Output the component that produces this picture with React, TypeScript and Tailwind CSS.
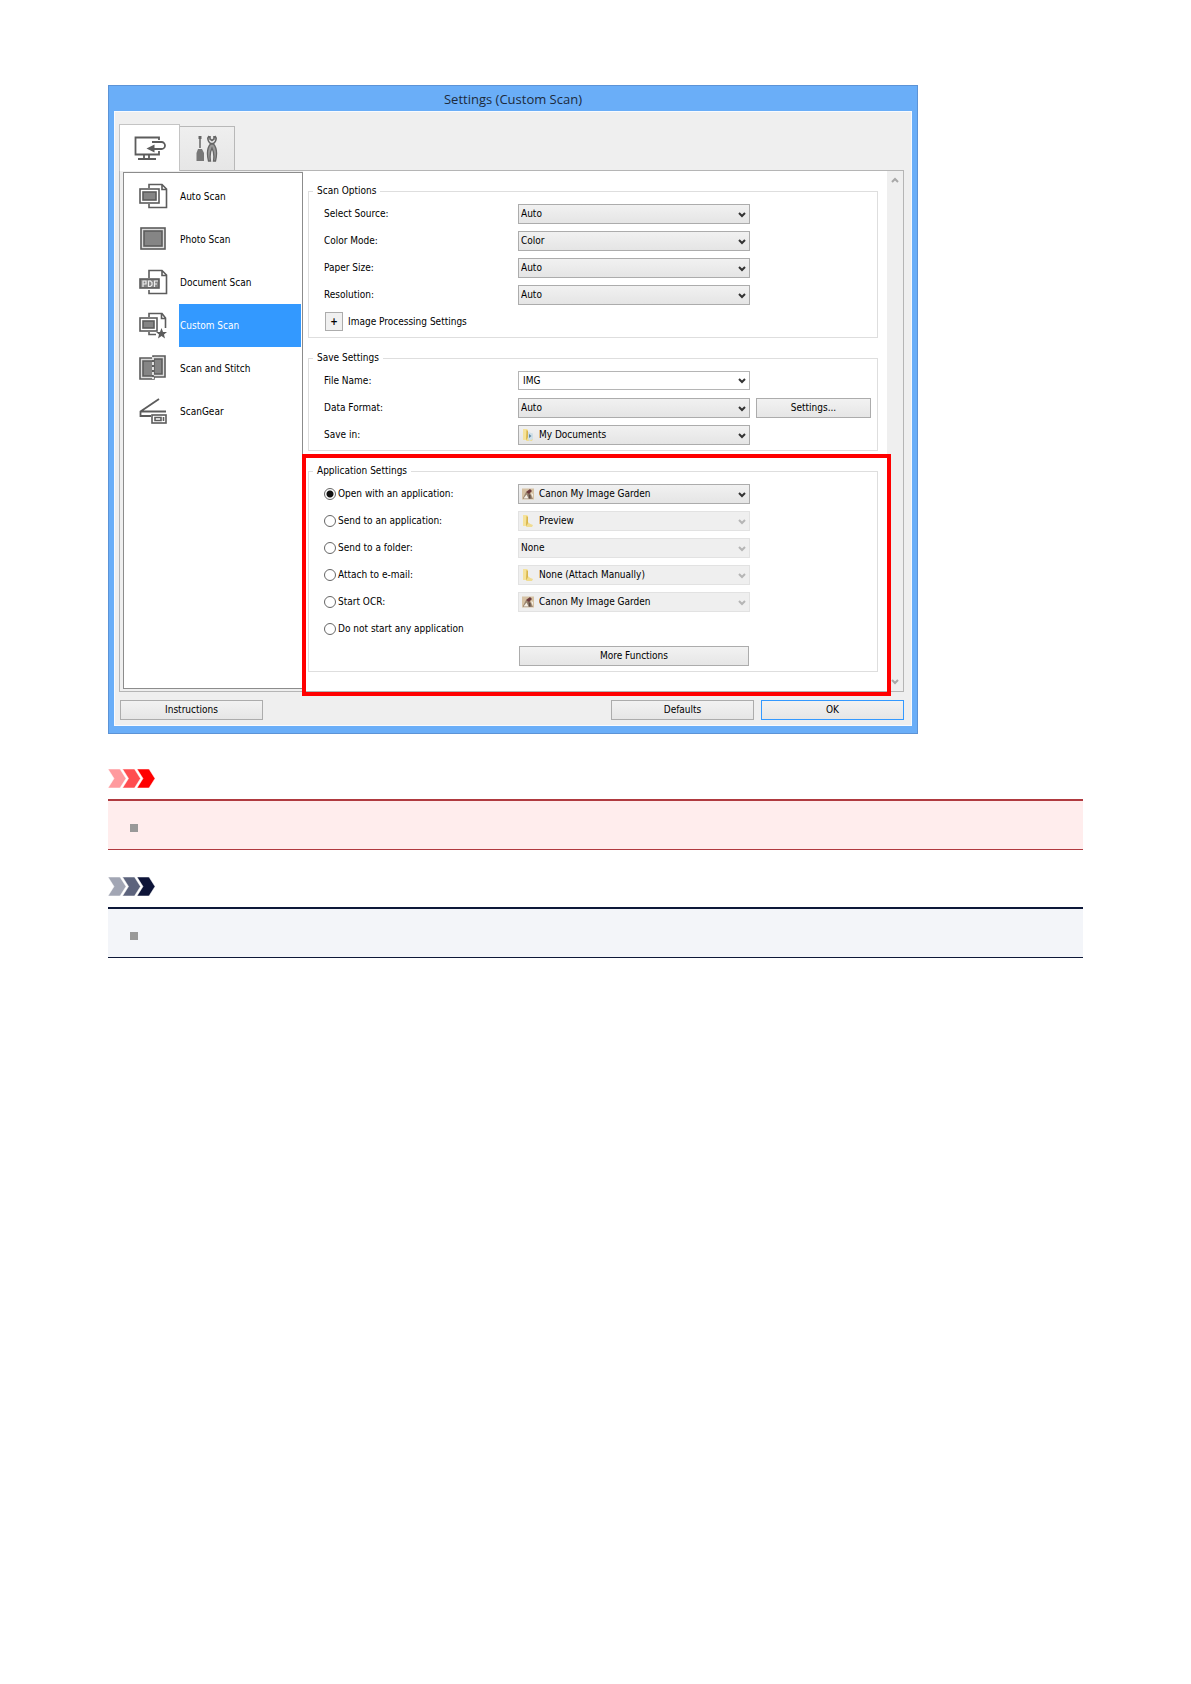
import React from 'react';

const Chevron = ({ className = '' }: { className?: string }) => (
  <svg viewBox="0 0 8 6" className={className} fill="none" stroke="currentColor" strokeWidth="2" aria-hidden="true">
    <path d="M1 1l3 3 3-3" />
  </svg>
);

const FolderIcon = ({ docs = false }: { docs?: boolean }) => (
  <svg viewBox="0 0 12 12" className="size-3" aria-hidden="true">
    <path d="M1 0h4l1 1v6l2 2v2H1z" fill="#f5e29a" />
    <path d="M4.500 1L6 2v8l-2 1z" fill="#d9b64c" />
    <path d="M6 8l5 2-1 2H4z" fill="#f0dc92" />
    {docs && <path d="M6 3l5 1.500V10l-4 2-1-3z" fill="#cfdfe8" />}
    {docs && <path d="M7 5l2.500 2L7 9z" fill="#5f87a0" />}
  </svg>
);

const GardenIcon = () => (
  <svg viewBox="0 0 12 12" className="size-3" aria-hidden="true">
    <rect x="0" y="0.500" width="12" height="11" fill="#d6c2a4" />
    <path d="M1 10l3-6 4 1 3 6H1z" fill="#9a8570" />
    <path d="M4 4l4-3 2 2-3 3z" fill="#6b3a3a" />
    <path d="M1.500 10.500l3-4 2 4zM9 5l2 1v4z" fill="#f4efe6" />
    <path d="M6.500 6l2 1v3.500H7z" fill="#5b4a44" />
  </svg>
);

const MonitorIcon = () => (
  <svg viewBox="0 0 32 25" className="h-[25px] w-8" fill="none" stroke="#5c5c5c" strokeWidth="1.800" aria-hidden="true">
    <path d="M25 4V1.500H1.500v17H25V15" />
    <path d="M10 18.500v4M15 18.500v4M4 23h18" />
    <path d="M18 6h9.500a3.500 3.500 0 010 7H19" />
    <path d="M12.500 12.500l8-4v8z" fill="#5c5c5c" stroke="none" />
  </svg>
);

const ToolsIcon = () => (
  <svg viewBox="0 0 22 27" className="h-[27px] w-[22px]" fill="none" stroke="#666" aria-hidden="true">
    <path d="M4 1v12" strokeWidth="1.500" />
    <path d="M2.500 1h3v3h-3z" fill="#666" stroke="none" />
    <path d="M2 14h4l2 4v8H.5v-8z" fill="#777" stroke="none" />
    <path d="M13 1c-2 2-1 6 1.500 7.500h3C20 7 21 3 19 1M14 1v3l2 1.500L18 4V1" strokeWidth="1.600" />
    <path d="M14.500 9C11 13 11 20 12.500 26h2c-1-6 0-10 1.500-13 1.500 3 2.500 7 1.500 13h2C21 20 21 13 17.500 9z" fill="#999" strokeWidth="1.300" />
  </svg>
);

const AutoIcon = () => (
  <>
    <path d="M10 5V1.500h13l4.500 4.500v18.500H10V21M23 2v4.500h4" />
    <rect x="1" y="6" width="19" height="14" fill="#fff" />
    <rect x="4" y="9" width="13" height="8" fill="#858585" />
  </>
);

const PhotoIcon = () => (
  <>
    <rect x="2" y="2" width="24" height="21" fill="#ddd" />
    <rect x="5" y="5" width="18" height="15" fill="#858585" />
  </>
);

const DocumentIcon = () => (
  <>
    <path d="M10 9V1.500h13l4.500 4.500v18.500H10V21M23 2v4.500h4" />
    <rect x="1" y="10" width="19" height="9" fill="#858585" />
    <path d="M4 18v-6h3v3H4M9.500 12v5.500h2l1.500-1.500v-2.500L11.500 12zM15.500 18v-6H19M15.500 15H18" stroke="#eee" strokeWidth="1.200" />
  </>
);

const CustomIcon = () => (
  <>
    <path d="M10 5V1.500h13l3.500 4.500v10M10 20v2.500h7M22.500 2v4.500h4" />
    <rect x="1" y="6" width="17" height="13" fill="#fff" />
    <rect x="4" y="9" width="11" height="7" fill="#858585" />
    <path d="M22.500 16l1.500 4h4l-3 2.500 1 4-3.500-2.500-3.500 2.500 1-4-3-2.500h4z" fill="#5c5c5c" stroke="none" />
  </>
);

const StitchIcon = () => (
  <>
    <path d="M1 3h14v21H1z" fill="#ddd" />
    <path d="M4 6h10v15H4z" fill="#858585" />
    <path d="M14 1h12v21H14z" fill="#ddd" />
    <path d="M15 4h8v15h-8z" fill="#858585" />
    <path d="M14 2v22" stroke="#fff" strokeDasharray="3 2" />
  </>
);

const GearIcon = () => (
  <>
    <path d="M20 1L1.500 13.500V18H12M1.500 13.500H27" strokeWidth="1.800" />
    <rect x="13" y="17" width="14" height="8" fill="#fff" />
    <path d="M16 19.500h6v3h-6zM24.500 19v4" />
  </>
);

const scans = [
  { name: 'Auto Scan', Icon: AutoIcon },
  { name: 'Photo Scan', Icon: PhotoIcon },
  { name: 'Document Scan', Icon: DocumentIcon },
  { name: 'Custom Scan', Icon: CustomIcon, active: true },
  { name: 'Scan and Stitch', Icon: StitchIcon },
  { name: 'ScanGear', Icon: GearIcon },
];

const options = [
  { id: 'source', label: 'Select Source:', value: 'Auto' },
  { id: 'color', label: 'Color Mode:', value: 'Color' },
  { id: 'paper', label: 'Paper Size:', value: 'Auto' },
  { id: 'resolution', label: 'Resolution:', value: 'Auto' },
];

const applications = [
  { id: 'open', label: 'Open with an application:', value: 'Canon My Image Garden', icon: <GardenIcon /> },
  { id: 'send', label: 'Send to an application:', value: 'Preview', icon: <FolderIcon /> },
  { id: 'folder', label: 'Send to a folder:', value: 'None' },
  { id: 'mail', label: 'Attach to e-mail:', value: 'None (Attach Manually)', icon: <FolderIcon /> },
  { id: 'ocr', label: 'Start OCR:', value: 'Canon My Image Garden', icon: <GardenIcon /> },
  { id: 'nothing', label: 'Do not start any application' },
];

const row = 'grid h-[27px] grid-cols-[194px_232px_1fr] items-center';
const button = 'h-5 border border-[#acacac] bg-linear-to-b from-[#f2f2f2] to-[#e6e6e6] text-center';

type SelectProps = { id: string; value: string; icon?: React.ReactNode; disabled?: boolean; label?: string };

const Select = ({ id, value, icon, disabled, label }: SelectProps) => (
  <div className="relative">
    <select
      id={id}
      aria-label={label}
      disabled={disabled}
      className={`block h-5 w-full appearance-none border text-black opacity-100 ${icon ? 'pl-5' : 'pl-[2px]'} ${
        disabled ? 'border-[#e2e2e2] bg-[#efefef]' : 'border-[#acacac] bg-linear-to-b from-[#f1f1f1] to-[#e5e5e5]'
      }`}
    >
      <option>{value}</option>
    </select>
    {icon && <span className="pointer-events-none absolute top-1 left-1">{icon}</span>}
    <Chevron className={`pointer-events-none absolute top-2 right-1 h-[6px] w-2 ${disabled ? 'text-[#b5b5b5]' : 'text-[#333]'}`} />
  </div>
);

const Group = ({ title, children }: { title: string; children: React.ReactNode }) => (
  <fieldset className="border border-[#dedede] pt-[2px] pr-[6px] pb-[2px] pl-[15px]">
    <legend className="-ml-[11px] px-1 leading-[14px]">{title}</legend>
    {children}
  </fieldset>
);

type NoteProps = { tones: string[]; box: string };

const Note = ({ tones, box }: NoteProps) => (
  <section>
    <svg viewBox="0 0 47 19" className="h-[19px] w-[47px]" aria-hidden="true">
      {tones.map((tone, i) => (
        <path key={tone} d="M0 0h12l6 9.500-6 9.500H0l6-9.500z" transform={`translate(${i * 14.5} 0)`} fill={tone} stroke="#fff" strokeWidth="0.500" />
      ))}
    </svg>
    <div className={`mt-[11px] h-[51px] border-t-2 border-b px-[22px] pt-[23px] ${box}`}>
      <div className="size-2 bg-[#999]" />
    </div>
  </section>
);

const App: React.FC = () => {
  return (
    <main className="min-h-screen bg-white px-[108px] pt-[85px] font-['DejaVu_Sans_Condensed','DejaVu_Sans',sans-serif] text-[10px] leading-[14px] text-black">
      <div className="max-w-[810px] border border-[#5c93d6] bg-[#6aaef8] px-[5px] pb-[7px]">
        <h1 className="h-[25px] text-center font-['Open_Sans',sans-serif] text-[13px] leading-[26px] text-[#1c2a3c]">Settings (Custom Scan)</h1>

        <div className="border border-[#f8fbff] bg-[#efefef] pt-3 pr-[7px] pb-[5px] pl-1">
          <div className="flex items-end" role="tablist">
            <button role="tab" aria-selected="true" aria-label="Scan from computer" className="relative z-10 -mb-px flex h-[47px] w-[61px] items-center justify-center border border-b-0 border-[#c4c4c4] bg-white">
              <MonitorIcon />
            </button>
            <button role="tab" aria-selected="false" aria-label="General settings" className="flex h-11 w-[55px] items-center justify-center border border-b-0 border-l-0 border-[#b8b8b8] bg-linear-to-b from-[#efefef] to-[#e6e6e6]">
              <ToolsIcon />
            </button>
          </div>

          <div className="flex border border-[#b5b5b5] bg-white">
            <div className="flex w-[183px] shrink-0 bg-[#efefef] pt-px pb-[2px] pl-[3px]">
              <ul className="w-full border border-[#8c8c8c] bg-white pt-[2px] pr-px">
                {scans.map(({ name, Icon, active }) => (
                  <li key={name}>
                    <button className="flex h-[43px] w-full items-center text-left">
                      <span className="w-[55px] shrink-0 pl-[15px]">
                        <svg viewBox="0 0 29 27" className="h-[27px] w-[29px]" fill="none" stroke="#5c5c5c" strokeWidth="1.600" aria-hidden="true">
                          <Icon />
                        </svg>
                      </span>
                      <span className={`flex h-full flex-1 items-center pl-px ${active ? 'bg-[#3399ff] text-white' : ''}`}>{name}</span>
                    </button>
                  </li>
                ))}
              </ul>
            </div>

            <div className="flex flex-1 flex-col gap-[13px] pt-[13px] pr-[9px] pb-[19px] pl-[5px]">
              <Group title="Scan Options">
                {options.map((o) => (
                  <div key={o.id} className={row}>
                    <label htmlFor={o.id}>{o.label}</label>
                    <Select id={o.id} value={o.value} />
                  </div>
                ))}
                <div className="flex h-[27px] items-center gap-[5px] pl-px">
                  <button id="expand" aria-labelledby="processing" className="flex h-[19px] w-[18px] items-center justify-center border border-[#acacac] bg-[#f0f0f0] font-bold">
                    +
                  </button>
                  <span id="processing">Image Processing Settings</span>
                </div>
              </Group>

              <Group title="Save Settings">
                <div className={row}>
                  <label htmlFor="file">File Name:</label>
                  <div className="flex h-[19px] items-center border border-[#b5b5b5] bg-white pr-[3px]">
                    <input id="file" defaultValue="IMG" className="w-full min-w-0 pl-1 outline-none" />
                    <button aria-label="Recent file names" className="text-[#333]">
                      <Chevron className="h-[6px] w-2" />
                    </button>
                  </div>
                </div>
                <div className={row}>
                  <label htmlFor="format">Data Format:</label>
                  <Select id="format" value="Auto" />
                  <button className={`${button} ml-[6px] max-w-[115px]`}>Settings...</button>
                </div>
                <div className={row}>
                  <label htmlFor="savein">Save in:</label>
                  <Select id="savein" value="My Documents" icon={<FolderIcon docs />} />
                </div>
              </Group>

              <div className="relative">
                <Group title="Application Settings">
                  {applications.map((a, i) => (
                    <div key={a.id} className={row}>
                      <label className="flex items-center gap-[2px] whitespace-nowrap">
                        <input
                          type="radio"
                          name="application"
                          defaultChecked={i === 0}
                          className="size-3 shrink-0 appearance-none rounded-full border border-[#666] bg-white checked:bg-[radial-gradient(circle,#111_3px,#fff_4px)]"
                        />
                        {a.label}
                      </label>
                      {a.value && <Select id={a.id} label={a.label} value={a.value} icon={a.icon} disabled={i > 0} />}
                    </div>
                  ))}
                  <div className={row}>
                    <button className={`${button} col-start-2 mx-px`}>More Functions</button>
                  </div>
                </Group>
                {/* highlight frame */}
                <div className="pointer-events-none absolute -top-[10px] -right-[13px] -bottom-6 -left-[6px] border-4 border-[#ff0000]" />
              </div>
            </div>

            <div className="flex w-4 shrink-0 flex-col items-center justify-between bg-[#efefef] py-[6px] text-[#a8a8a8]">
              <Chevron className="h-[6px] w-2 rotate-180" />
              <Chevron className="h-[6px] w-2" />
            </div>
          </div>

          <div className="mt-2 flex gap-[7px] pl-px">
            <button className={`${button} w-[143px]`}>Instructions</button>
            <button className={`${button} ml-auto w-[143px]`}>Defaults</button>
            <button className="h-5 w-[143px] border border-[#3399ff] bg-linear-to-b from-[#f2f2f2] to-[#e6e6e6] text-center">OK</button>
          </div>
        </div>
      </div>

      <div className="mt-[35px] flex flex-col gap-[27px]">
        <Note tones={['#ff9a9e', '#ff4d50', '#ff0000']} box="border-[#b03a40] bg-[#ffeded]" />
        <Note tones={['#a2a6b4', '#5c637c', '#0d1438']} box="border-[#0d1838] bg-[#f3f5f9]" />
      </div>
    </main>
  );
};

export default App;
